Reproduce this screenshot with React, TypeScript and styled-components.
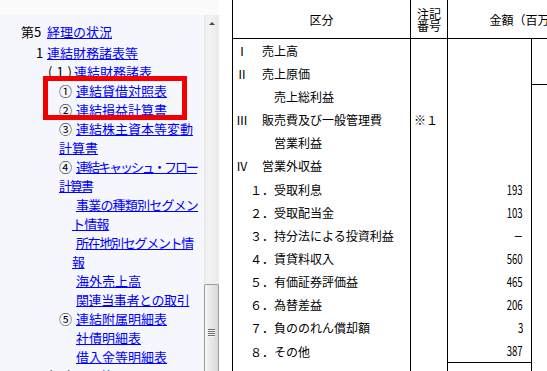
import React from "react";
import styled, { createGlobalStyle } from "styled-components";

const Global = createGlobalStyle`
  html, body { margin: 0; padding: 0; background: #ffffff; }
  body { font-family: "Noto Sans CJK JP", "Noto Sans", sans-serif; }
`;

const Page = styled.div`
  display: flex;
  width: 547px;
  height: 371px;
  overflow: hidden;
`;

/* ---------- left frame (table of contents) ---------- */

const LeftFrame = styled.div`
  width: 219px;
  flex: none;
  display: flex;
  flex-direction: column;
`;

const TopStrip = styled.div`
  height: 15px;
  flex: none;
  background: #fbfbfc;
`;

const LeftBody = styled.div`
  flex: 1;
  min-height: 0;
  display: flex;
`;

const Nav = styled.div`
  position: relative;
  flex: 1;
  min-width: 0;
  overflow: hidden;
  background: #f5f7fd;
  padding-top: 7px;
  font-size: 13px;
  line-height: 19px;
  color: #000;
`;

const Item = styled.div<{ $indent: number; $gap?: number }>`
  padding-left: ${(p) => p.$indent}px;
  margin-bottom: ${(p) => p.$gap ?? 0}px;
  white-space: nowrap;
`;

const Marker = styled.span<{ $w: number; $spread?: number }>`
  display: inline-block;
  width: ${(p) => p.$w}px;
  letter-spacing: ${(p) => p.$spread ?? 0}px;
  vertical-align: top;
`;

const Link = styled.a<{ $tight?: number }>`
  color: #0000ff;
  text-decoration: underline;
  letter-spacing: ${(p) => p.$tight ?? 0}px;
`;

const Highlight = styled.div`
  position: absolute;
  left: 43px;
  top: 61px;
  width: 144px;
  height: 44px;
  box-sizing: border-box;
  border: 5px solid #f20000;
  pointer-events: none;
`;

const Scrollbar = styled.div`
  width: 15px;
  flex: none;
  display: flex;
  flex-direction: column;
  background: linear-gradient(to right, #e6e6e6 0%, #f4f4f4 25%, #eeeeee 70%, #e9e9e9 100%);
`;

const ArrowButton = styled.div`
  height: 17px;
  flex: none;
  display: flex;
  align-items: center;
  justify-content: center;
`;

const ArrowUp = styled.div`
  width: 0;
  height: 0;
  border-left: 3px solid transparent;
  border-right: 3px solid transparent;
  border-bottom: 3px solid #4a4a4a;
`;

const Track = styled.div`
  flex: 1;
  display: flex;
  flex-direction: column;
  padding-top: 252px;
`;

const Thumb = styled.div`
  flex: 1;
  box-sizing: border-box;
  border: 1px solid #9c9c9c;
  border-bottom: none;
  border-radius: 2px 2px 0 0;
  background: linear-gradient(to right, #f6f6f6 0%, #e7e7e7 50%, #d8d8d8 100%);
  display: flex;
  flex-direction: column;
  align-items: center;
  padding-top: 44px;
`;

const GripLine = styled.div`
  width: 7px;
  height: 1px;
  background: #6f6f6f;
  margin-bottom: 1px;
  box-shadow: 0 1px 0 #f5f5f5;
`;

/* ---------- right frame (statement table) ---------- */

const RightFrame = styled.div`
  flex: 1;
  min-width: 0;
  overflow: hidden;
  background: #ffffff;
  padding-left: 13px;
`;

const Sheet = styled.div`
  display: grid;
  grid-template-columns: 178px 37px 84px 84px;
  grid-template-rows: 39px;
  grid-auto-rows: 23.17px;
  width: 383px;
  font-size: 12px;
  color: #000;
  line-height: 14px;
`;

const HeadCell = styled.div<{ $span?: number }>`
  grid-column: span ${(p) => p.$span ?? 1};
  box-sizing: border-box;
  border-left: 1px solid #000;
  border-bottom: 1px solid #000;
  display: flex;
  align-items: center;
  justify-content: center;
  text-align: center;
  padding-top: 2px;
  line-height: 12px;
  white-space: nowrap;
`;

const Cell = styled.div<{ $pad?: number; $right?: boolean; $bottom?: boolean }>`
  box-sizing: border-box;
  border-left: 1px solid #000;
  border-bottom: ${(p) => (p.$bottom ? "1px solid #000" : "none")};
  display: flex;
  align-items: center;
  justify-content: ${(p) => (p.$right ? "flex-end" : "flex-start")};
  padding-left: ${(p) => p.$pad ?? 0}px;
  padding-right: ${(p) => (p.$right ? 8 : 0)}px;
  white-space: nowrap;
`;

const LastRowCell = styled(Cell)`
  align-items: flex-start;
  padding-top: 8px;
`;

const RowMarker = styled.span<{ $w: number }>`
  display: inline-block;
  width: ${(p) => p.$w}px;
  flex: none;
`;

const Num = styled.span`
  display: inline-block;
  font-size: 13px;
  transform: scaleX(0.74);
  transform-origin: right center;
`;

type Row = {
  kind: "roman" | "sub" | "item" | "plain";
  mark?: string;
  label: string;
  note?: string;
  amount?: string;
  amountBorder?: boolean;
  sideBorder?: boolean;
};

const rows: Row[] = [
  { kind: "roman", mark: "Ⅰ", label: "売上高" },
  { kind: "roman", mark: "Ⅱ", label: "売上原価", sideBorder: true },
  { kind: "sub", label: "売上総利益" },
  { kind: "roman", mark: "Ⅲ", label: "販売費及び一般管理費", note: "※１" },
  { kind: "sub", label: "営業利益" },
  { kind: "roman", mark: "Ⅳ", label: "営業外収益" },
  { kind: "item", mark: "１．", label: "受取利息", amount: "193" },
  { kind: "item", mark: "２．", label: "受取配当金", amount: "103" },
  { kind: "item", mark: "３．", label: "持分法による投資利益", amount: "－" },
  { kind: "item", mark: "４．", label: "賃貸料収入", amount: "560" },
  { kind: "item", mark: "５．", label: "有価証券評価益", amount: "465" },
  { kind: "item", mark: "６．", label: "為替差益", amount: "206" },
  { kind: "item", mark: "７．", label: "負ののれん償却額", amount: "3" },
  { kind: "item", mark: "８．", label: "その他", amount: "387", amountBorder: true },
  { kind: "plain", label: "営業外費用" },
];

function LabelCell({ row }: { row: Row }) {
  if (row.kind === "roman") {
    return (
      <Cell $pad={3}>
        <RowMarker $w={26}>{row.mark}</RowMarker>
        {row.label}
      </Cell>
    );
  }
  if (row.kind === "item") {
    return (
      <Cell $pad={17}>
        <RowMarker $w={24}>{row.mark}</RowMarker>
        {row.label}
      </Cell>
    );
  }
  if (row.kind === "sub") {
    return <Cell $pad={41}>{row.label}</Cell>;
  }
  return <LastRowCell $pad={23}>{row.label}</LastRowCell>;
}

export default function App() {
  return (
    <>
      <Global />
      <Page>
        <LeftFrame>
          <TopStrip />
          <LeftBody>
            <Nav>
              <Item $indent={21} $gap={2}>
                <Marker $w={26}>第5</Marker>
                <Link href="#">経理の状況</Link>
              </Item>
              <Item $indent={36}>
                <Marker $w={11}>1</Marker>
                <Link href="#">連結財務諸表等</Link>
              </Item>
              <Item $indent={48}>
                <Marker $w={26} $spread={4}>(1)</Marker>
                <Link href="#">連結財務諸表</Link>
              </Item>
              <Item $indent={59}>
                <Marker $w={17}>①</Marker>
                <Link href="#">連結貸借対照表</Link>
              </Item>
              <Item $indent={59}>
                <Marker $w={17}>②</Marker>
                <Link href="#">連結損益計算書</Link>
              </Item>
              <Item $indent={59}>
                <Marker $w={17}>③</Marker>
                <Link href="#">
                  連結株主資本等変動
                  <br />
                  計算書
                </Link>
              </Item>
              <Item $indent={59}>
                <Marker $w={17}>④</Marker>
                <Link href="#" $tight={-2}>
                  連結キャッシュ・フロー
                  <br />
                  計算書
                </Link>
              </Item>
              <Item $indent={72}>
                <Marker $w={4} />
                <Link href="#" $tight={-0.8}>
                  事業の種類別セグメン
                  <br />
                  ト情報
                </Link>
              </Item>
              <Item $indent={72}>
                <Marker $w={4} />
                <Link href="#" $tight={-1.3}>
                  所在地別セグメント情
                  <br />
                  報
                </Link>
              </Item>
              <Item $indent={72}>
                <Marker $w={4} />
                <Link href="#">海外売上高</Link>
              </Item>
              <Item $indent={72}>
                <Marker $w={4} />
                <Link href="#" $tight={-0.4}>関連当事者との取引</Link>
              </Item>
              <Item $indent={59}>
                <Marker $w={17}>⑤</Marker>
                <Link href="#">連結附属明細表</Link>
              </Item>
              <Item $indent={72}>
                <Marker $w={4} />
                <Link href="#">社債明細表</Link>
              </Item>
              <Item $indent={72}>
                <Marker $w={4} />
                <Link href="#">借入金等明細表</Link>
              </Item>
              <Item $indent={48}>
                <Marker $w={26} $spread={4}>(2)</Marker>
                <Link href="#">その他</Link>
              </Item>
              <Highlight />
            </Nav>
            <Scrollbar>
              <ArrowButton>
                <ArrowUp />
              </ArrowButton>
              <Track>
                <Thumb>
                  <GripLine />
                  <GripLine />
                  <GripLine />
                  <GripLine />
                </Thumb>
              </Track>
            </Scrollbar>
          </LeftBody>
        </LeftFrame>
        <RightFrame>
          <Sheet>
            <HeadCell>区分</HeadCell>
            <HeadCell>
              注記
              <br />
              番号
            </HeadCell>
            <HeadCell $span={2}>金額（百万円）</HeadCell>
            {rows.map((row, i) => (
              <React.Fragment key={i}>
                <LabelCell row={row} />
                <Cell $pad={3}>{row.note}</Cell>
                <Cell $right $bottom={row.amountBorder}>
                  {row.amount ? <Num>{row.amount}</Num> : null}
                </Cell>
                <Cell $bottom={row.sideBorder} />
              </React.Fragment>
            ))}
          </Sheet>
        </RightFrame>
      </Page>
    </>
  );
}
